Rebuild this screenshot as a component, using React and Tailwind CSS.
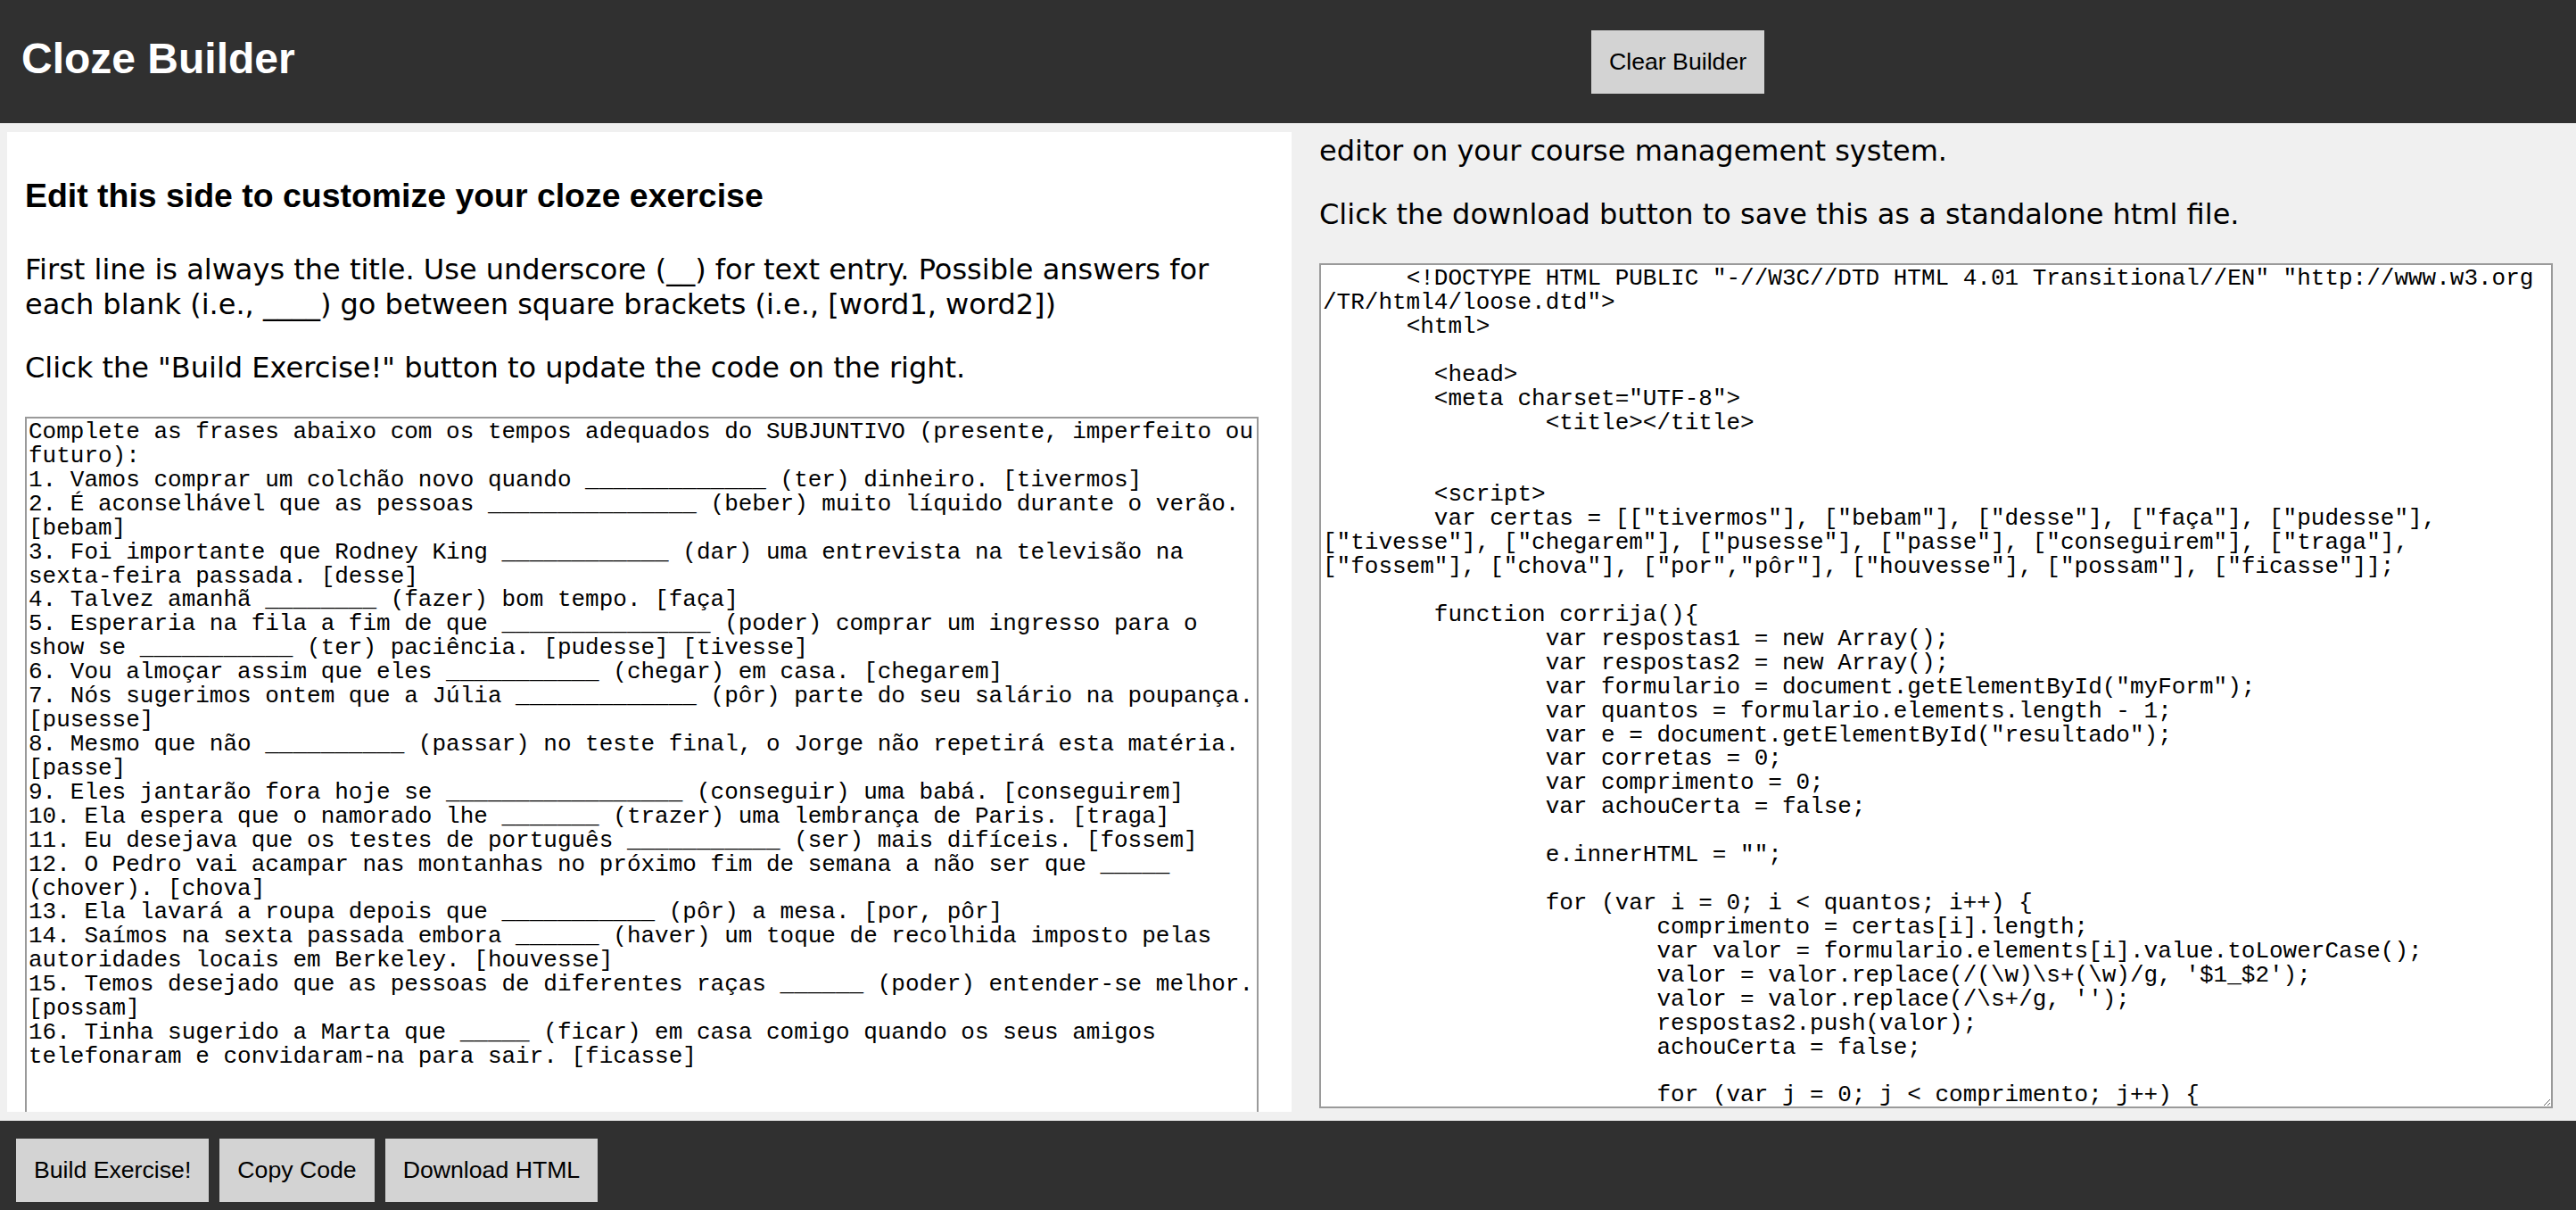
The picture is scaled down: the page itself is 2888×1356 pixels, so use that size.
import { useLayoutEffect, useRef } from 'react';

const exercise = `Complete as frases abaixo com os tempos adequados do SUBJUNTIVO (presente, imperfeito ou futuro):
1. Vamos comprar um colchão novo quando _____________ (ter) dinheiro. [tivermos]
2. É aconselhável que as pessoas _______________ (beber) muito líquido durante o verão. [bebam]
3. Foi importante que Rodney King ____________ (dar) uma entrevista na televisão na sexta-feira passada. [desse]
4. Talvez amanhã ________ (fazer) bom tempo. [faça]
5. Esperaria na fila a fim de que _______________ (poder) comprar um ingresso para o show se ___________ (ter) paciência. [pudesse] [tivesse]
6. Vou almoçar assim que eles ___________ (chegar) em casa. [chegarem]
7. Nós sugerimos ontem que a Júlia _____________ (pôr) parte do seu salário na poupança. [pusesse]
8. Mesmo que não __________ (passar) no teste final, o Jorge não repetirá esta matéria. [passe]
9. Eles jantarão fora hoje se _________________ (conseguir) uma babá. [conseguirem]
10. Ela espera que o namorado lhe _______ (trazer) uma lembrança de Paris. [traga]
11. Eu desejava que os testes de português ___________ (ser) mais difíceis. [fossem]
12. O Pedro vai acampar nas montanhas no próximo fim de semana a não ser que _____ (chover). [chova]
13. Ela lavará a roupa depois que ___________ (pôr) a mesa. [por, pôr]
14. Saímos na sexta passada embora ______ (haver) um toque de recolhida imposto pelas autoridades locais em Berkeley. [houvesse]
15. Temos desejado que as pessoas de diferentes raças ______ (poder) entender-se melhor. [possam]
16. Tinha sugerido a Marta que _____ (ficar) em casa comigo quando os seus amigos telefonaram e convidaram-na para sair. [ficasse]
`;

const code = `      <!DOCTYPE HTML PUBLIC "-//W3C//DTD HTML 4.01 Transitional//EN" "http://www.w3.org
/TR/html4/loose.dtd">
      <html>

        <head>
        <meta charset="UTF-8">
                <title></title>


        <script>
        var certas = [["tivermos"], ["bebam"], ["desse"], ["faça"], ["pudesse"], ["tivesse"], ["chegarem"], ["pusesse"], ["passe"], ["conseguirem"], ["traga"], ["fossem"], ["chova"], ["por","pôr"], ["houvesse"], ["possam"], ["ficasse"]];

        function corrija(){
                var respostas1 = new Array();
                var respostas2 = new Array();
                var formulario = document.getElementById("myForm");
                var quantos = formulario.elements.length - 1;
                var e = document.getElementById("resultado");
                var corretas = 0;
                var comprimento = 0;
                var achouCerta = false;

                e.innerHTML = "";

                for (var i = 0; i < quantos; i++) {
                        comprimento = certas[i].length;
                        var valor = formulario.elements[i].value.toLowerCase();
                        valor = valor.replace(/(\\w)\\s+(\\w)/g, '$1_$2');
                        valor = valor.replace(/\\s+/g, '');
                        respostas2.push(valor);
                        achouCerta = false;

                        for (var j = 0; j < comprimento; j++) {
                                for (var k = 0; k < respostas2.length; k++) {
                                        if (respostas2[k] == certas[i][j]) {
                                                achouCerta = true;
                                        }
                                }
                        }
                }
        }
        </script>
        </head>
`;

function GrayButton({ children }) {
  return (
    <button
      type="button"
      className="shrink-0 bg-[#d3d3d3] px-[20px] py-[20px] font-['Liberation_Sans',Arial,sans-serif] text-[26.67px] leading-[31px] text-black"
    >
      {children}
    </button>
  );
}

function CodeBox({ value }) {
  return (
    <textarea
      defaultValue={value}
      spellCheck={false}
      className="mt-[35px] block h-[947px] w-[1383px] border-2 border-[#9a9a9a] bg-white p-[2px] font-['Liberation_Mono','Courier_New',monospace] text-[26px] leading-[26.92px] text-black [scrollbar-width:none] outline-none"
    />
  );
}

function SideText({ heading, children }) {
  return (
    <>
      <h3 className="m-0 font-['Liberation_Sans',Arial,sans-serif] text-[37.44px] font-bold leading-[43px] text-black">
        {heading}
      </h3>
      {children}
    </>
  );
}

export default function App() {
  const rightRef = useRef(null);

  // the output side is scrolled down to the top of the code box
  useLayoutEffect(() => {
    if (rightRef.current) rightRef.current.scrollTop = 172;
  }, []);

  return (
    <div className="flex h-[1356px] flex-col overflow-hidden bg-[#f0f0f0] font-['DejaVu_Sans',Verdana,sans-serif] text-black">
      {/* Header */}
      <header className="grid h-[138px] shrink-0 grid-cols-[1784px_auto_1fr] items-center bg-[#303030]">
        <h1 className="mb-[7px] w-fit pl-[24px] font-['Liberation_Sans',Arial,sans-serif] text-[48px] font-bold leading-[55px] text-white">
          Cloze Builder
        </h1>
        <GrayButton>Clear Builder</GrayButton>
      </header>

      {/* Two sides */}
      <main className="flex min-h-0 flex-1 gap-[10px] px-[8px] py-[10px]">
        <section className="w-[1440px] shrink-0 overflow-hidden bg-white px-[20px] pt-[50px]">
          <SideText heading="Edit this side to customize your cloze exercise">
            <p className="mt-[42px] text-[32px] leading-[39px]">
              First line is always the title. Use underscore (__) for text entry. Possible answers for each blank (i.e., ____) go between square brackets (i.e., [word1, word2])
            </p>
            <p className="mt-[32px] text-[32px] leading-[39px]">
              Click the "Build Exercise!" button to update the code on the right.
            </p>
          </SideText>
          <CodeBox value={exercise} />
        </section>

        <section
          ref={rightRef}
          className="min-w-0 flex-1 overflow-auto px-[21px] pt-[50px] pb-[20px] [scrollbar-width:none]"
        >
          <SideText heading="Copy the code from this side">
            <p className="mt-[42px] text-[32px] leading-[39px]">
              Copy the code below and paste it into the HTML source
              <br />
              editor on your course management system.
            </p>
            <p className="mt-[32px] text-[32px] leading-[39px]">
              Click the download button to save this as a standalone html file.
            </p>
          </SideText>
          <CodeBox value={code} />
        </section>
      </main>

      {/* Footer actions */}
      <footer className="flex h-[100px] shrink-0 items-start gap-[12px] bg-[#303030] pl-[18px] pt-[20px]">
        <GrayButton>Build Exercise!</GrayButton>
        <GrayButton>Copy Code</GrayButton>
        <GrayButton>Download HTML</GrayButton>
      </footer>
    </div>
  );
}
